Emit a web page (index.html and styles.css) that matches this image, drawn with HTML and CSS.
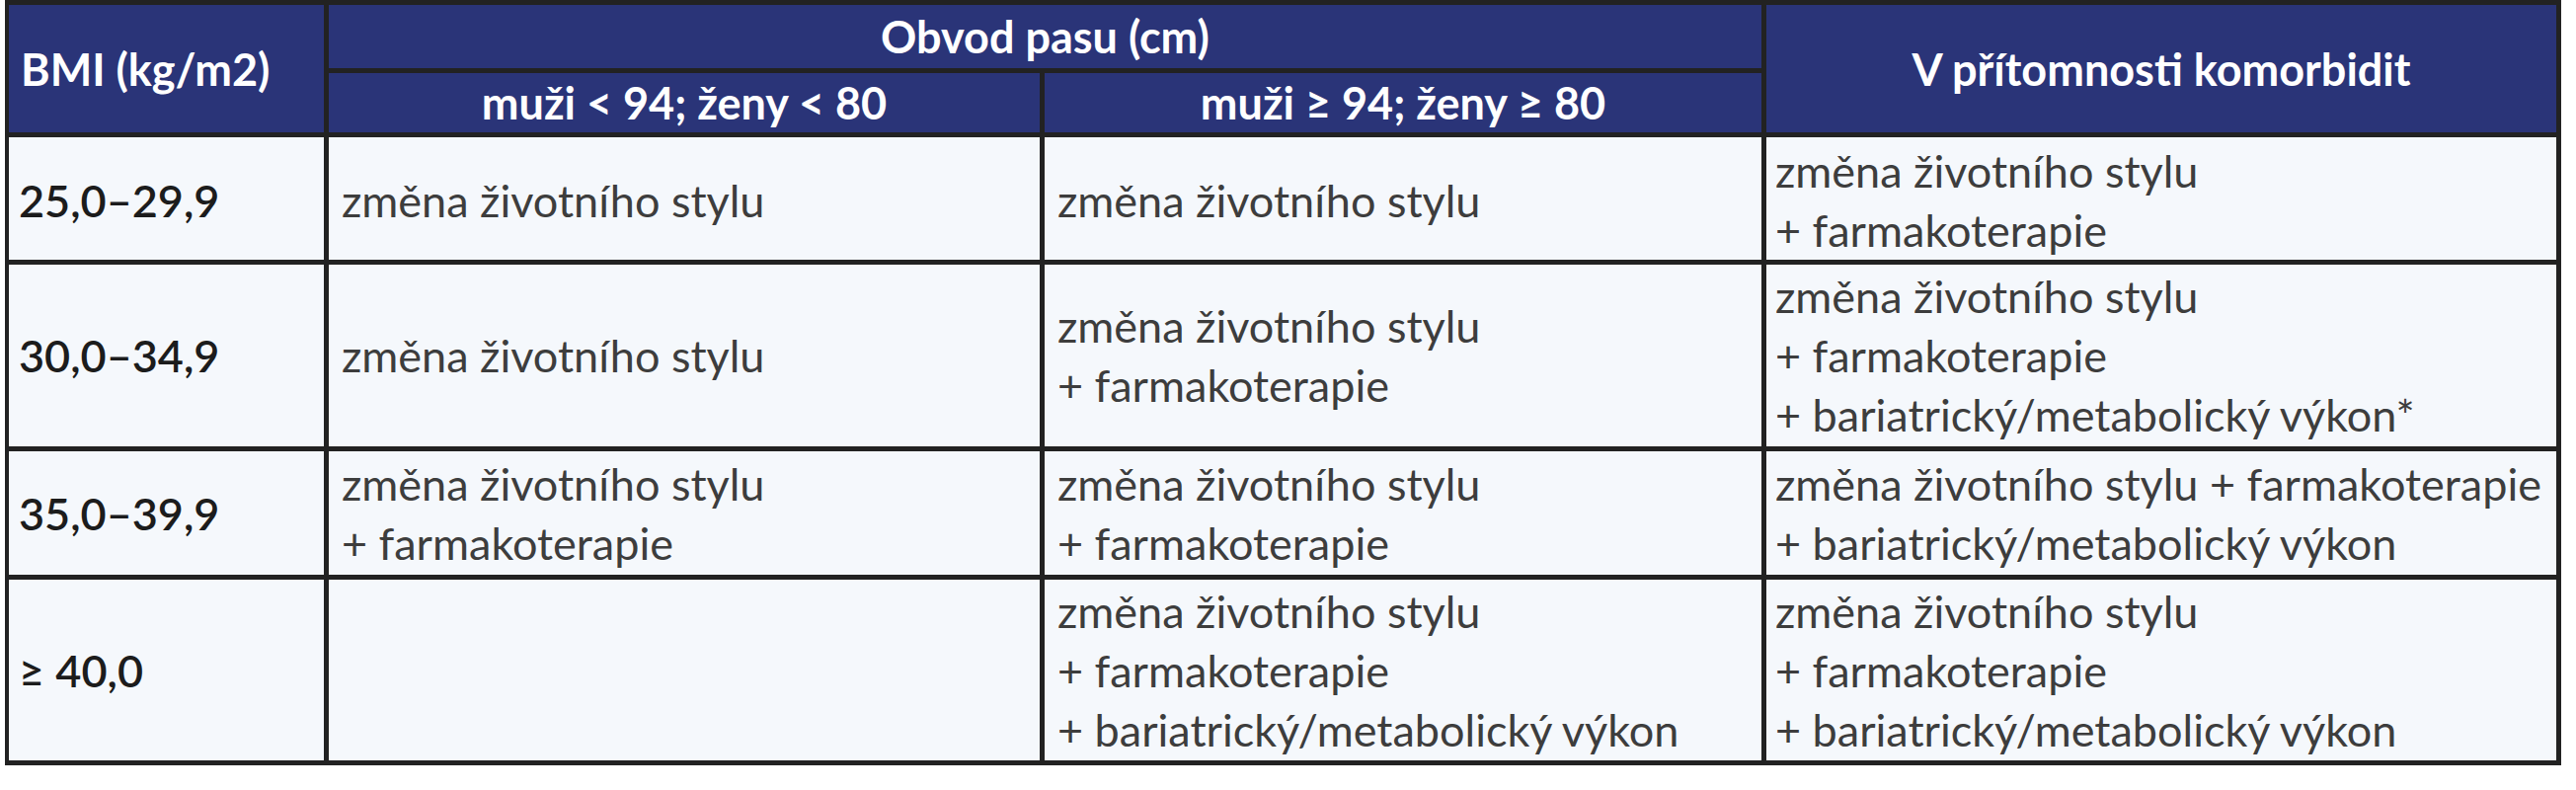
FILE: index.html
```html
<!DOCTYPE html>
<html lang="cs">
<head>
<meta charset="utf-8">
<title>BMI – léčba obezity</title>
<link rel="stylesheet" href="styles.css">
</head>
<body>
<div class="sheet">
  <div class="grid" role="table">
    <div class="cell head head-bmi">BMI (kg/m2)</div>
    <div class="cell head head-waist">Obvod pasu (cm)</div>
    <div class="cell head head-comorb">V přítomnosti komorbidit</div>
    <div class="cell head head-sub">muži &lt; 94; ženy &lt; 80</div>
    <div class="cell head head-sub">muži ≥ 94; ženy ≥ 80</div>

    <div class="cell label r1">25,0–29,9</div>
    <div class="cell body c2 r1">změna životního stylu</div>
    <div class="cell body c3 r1">změna životního stylu</div>
    <div class="cell body c4 r1"><span>změna životního stylu</span><span>+ farmakoterapie</span></div>

    <div class="cell label">30,0–34,9</div>
    <div class="cell body c2">změna životního stylu</div>
    <div class="cell body c3"><span>změna životního stylu</span><span>+ farmakoterapie</span></div>
    <div class="cell body c4"><span>změna životního stylu</span><span>+ farmakoterapie</span><span>+ bariatrický/metabolický výkon*</span></div>

    <div class="cell label">35,0–39,9</div>
    <div class="cell body c2"><span>změna životního stylu</span><span>+ farmakoterapie</span></div>
    <div class="cell body c3"><span>změna životního stylu</span><span>+ farmakoterapie</span></div>
    <div class="cell body c4"><span>změna životního stylu + farmakoterapie</span><span>+ bariatrický/metabolický výkon</span></div>

    <div class="cell label">≥ 40,0</div>
    <div class="cell body c2"></div>
    <div class="cell body c3"><span>změna životního stylu</span><span>+ farmakoterapie</span><span>+ bariatrický/metabolický výkon</span></div>
    <div class="cell body c4"><span>změna životního stylu</span><span>+ farmakoterapie</span><span>+ bariatrický/metabolický výkon</span></div>
  </div>
</div>
</body>
</html>
```

FILE: styles.css
```css
* {
  box-sizing: border-box;
}

html, body {
  margin: 0;
  padding: 0;
  background: #ffffff;
}

body {
  font-family: Lato, "Open Sans", "Liberation Sans", sans-serif;
  font-size: 45px;
}

.sheet {
  padding-left: 5px;
}

.grid {
  display: grid;
  grid-template-columns: 319px 720px 726px 800px;
  grid-template-rows: 64px 60px 124px 184px 125px 183px;
  gap: 5px;
  padding: 5px 5px 5px 4px;
  background: #222222;
  width: max-content;
}

.cell {
  display: flex;
  flex-direction: column;
  justify-content: center;
  white-space: nowrap;
  line-height: 60px;
}

.head {
  background: #2a3478;
  color: #ffffff;
  font-weight: 700;
  align-items: center;
  text-align: center;
}

.head-bmi {
  grid-row: span 2;
  align-items: flex-start;
  padding-left: 12px;
}

.head-waist {
  grid-column: span 2;
}

.head-comorb {
  grid-row: span 2;
}

.label {
  background: #f5f8fc;
  color: #1c1c1c;
  font-weight: 600;
  padding-left: 10px;
}

.body {
  background: #f5f8fc;
  color: #3d3d3d;
  font-weight: 400;
}

.r1 {
  padding-top: 4px;
}

.c2, .c3 {
  padding-left: 13px;
}

.c4 {
  padding-left: 9px;
}
```
